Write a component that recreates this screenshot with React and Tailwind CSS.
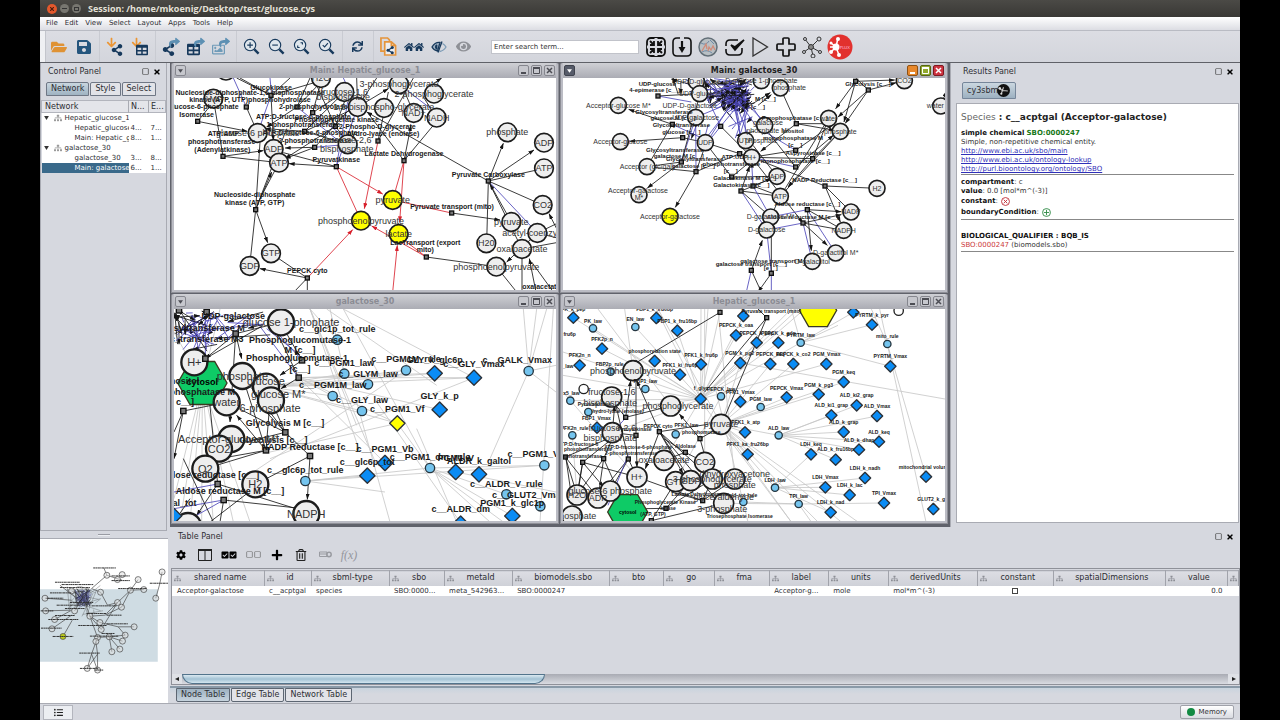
// ============================================================
// NETWORK WORKBENCH
// Desktop window: toolbar, control panel, four network views,
// results panel and the node table.
// ============================================================
import {
  FaFolderOpen, FaSave, FaShareAlt, FaTable, FaShare, FaArrowDown, FaRegImage,
  FaSync, FaHome, FaEyeSlash, FaEye, FaCog, FaPlus, FaRegTrashAlt, FaCheckSquare,
  FaListUl, FaSitemap, FaRegSquare, FaTimes
} from 'react-icons/fa';

// ---- Network data ----
// circle: [x, y, label, fill?, dx?, dy?]
// square: [x, y]
// edge:   [x1, y1, x2, y2, color?, arrow?]   color: k black, b blue, r red, g grey
// text:   [x, y, label]   bold reaction names

const GREY = '#eeeeee';
const YELLOW = '#ffff00';

const hepaticMain = {
  viewBox: '12 48 1146 636',
  r: 29, font: 27, bold: 21, stroke: 4,
  circles: [
    [168, 26, ''], [130, 110, 'AMP'], [453, 48, 'H2O'], [523, 90, 'fructose-1,6'], [563, 135, '1,3-bisphospho-glycerate', GREY, 78],
    [642, 138, ''], [687, 67, '3-phosphoglycerate'], [792, 95, '2-phosphoglycerate'], [731, 153, 'NAD+'], [800, 167, 'NADH'],
    [263, 213, 'glucose-6 phosphate'], [311, 261, 'ADP'], [327, 302, 'ATP'], [533, 247, 'fructose-2,6', GREY, 0, -12],
    [1012, 211, 'phosphate'], [1122, 242, 'ADP'], [1122, 319, 'ATP'], [1118, 429, 'CO2'], [1024, 480, 'pyruvate'],
    [1102, 513, 'acetyl-coenzyme A', GREY, 8], [1056, 561, 'oxaloacetate'], [949, 544, 'H20'], [979, 614, 'phosphoenolpyruvate'],
    [668, 414, 'pyruvate', YELLOW], [573, 476, 'phosphoenolpyruvate', YELLOW], [686, 516, 'lactate', YELLOW],
    [303, 574, 'GTP'], [239, 612, 'GDP']
  ],
  plain: [[530, 262, 'bisphosphate'], [520, 104, 'bisphosphate']],
  squares: [
    [83, 178], [159, 283], [229, 135], [257, 443], [412, 648], [499, 314], [404, 208], [434, 256], [496, 193],
    [381, 135], [428, 152], [624, 237], [702, 296], [955, 357], [845, 453], [769, 585], [303, 100]
  ],
  edges: [
    [83, 178, 232, 208, 'k', 1], [83, 178, 122, 130], [130, 110, 159, 283], [159, 283, 280, 266, 'k', 1], [159, 283, 327, 302],
    [229, 135, 263, 213], [229, 135, 190, 48, 'b'], [200, 48, 303, 100], [303, 100, 310, 235, 'k', 1], [303, 100, 263, 213, 'b'],
    [303, 100, 210, 48], [303, 100, 360, 48], [303, 100, 440, 60], [499, 314, 357, 305, 'k', 1], [499, 314, 340, 272],
    [499, 314, 573, 476, 'r'], [499, 314, 638, 396, 'r', 1], [499, 314, 533, 120, 'b'], [499, 314, 563, 135, 'b'],
    [257, 443, 305, 330, 'k', 1], [257, 443, 270, 240], [257, 443, 350, 200], [270, 410, 327, 302], [257, 443, 293, 542, 'k', 1],
    [257, 443, 239, 612], [412, 648, 270, 620, 'k', 1], [412, 648, 303, 574], [412, 648, 548, 503, 'r', 1], [412, 648, 412, 690],
    [412, 648, 372, 690], [624, 237, 583, 440, 'r', 1], [624, 237, 730, 48], [624, 237, 655, 90], [702, 296, 668, 414, 'r'],
    [702, 296, 689, 480, 'r', 1], [702, 296, 723, 190, 'k', 1], [702, 296, 790, 190], [702, 296, 595, 155], [668, 690, 682, 550, 'r', 1],
    [668, 414, 845, 453, 'r'], [845, 453, 990, 474, 'k', 1], [769, 585, 605, 492, 'r', 1], [769, 585, 979, 614], [769, 585, 690, 525, 'r'],
    [955, 357, 590, 150, 'k', 1], [955, 357, 1000, 244, 'k', 1], [955, 357, 1092, 264, 'k', 1], [955, 357, 1122, 319], [955, 357, 1118, 429],
    [955, 357, 950, 544], [1024, 480, 960, 366, 'k', 1], [1102, 513, 960, 362, 'b'], [955, 357, 1056, 561], [1102, 513, 1170, 480],
    [1102, 513, 1170, 530], [1102, 513, 1010, 600, 'k', 1], [1056, 561, 1056, 700], [1056, 561, 1170, 540], [979, 614, 1040, 690],
    [1100, 700, 1078, 590, 'k', 1], [1150, 690, 1085, 600], [1160, 500, 1137, 455, 'k', 1], [404, 208, 533, 247], [404, 208, 285, 200, 'k', 1],
    [404, 208, 563, 135], [404, 208, 523, 90], [434, 256, 345, 258, 'k', 1], [434, 256, 533, 247, 'b'], [434, 256, 345, 290, 'k', 1],
    [434, 256, 540, 140], [496, 193, 523, 120], [496, 193, 533, 240], [496, 193, 345, 290, 'k', 1], [496, 193, 430, 48], [381, 135, 453, 60],
    [381, 135, 510, 240, 'b'], [381, 135, 290, 195, 'k', 1], [381, 135, 420, 48], [428, 152, 523, 90], [428, 152, 453, 60, 'k', 1],
    [428, 152, 530, 230, 'b'], [563, 135, 560, 48], [563, 135, 655, 80, 'k', 1], [563, 135, 620, 48], [563, 135, 520, 48, 'b'],
    [731, 153, 700, 80], [800, 167, 760, 105], [790, 65, 815, 48, 'k', 1], [687, 67, 780, 138, 'b'], [300, 48, 305, 100, 'b']
  ],
  texts: [
    [303, 76, 'Glucokinase'], [240, 92, 'Nucleoside-diphosphate-1,6-bisphosphatase'], [240, 113, 'kinase (ATP, UTP)phosphohydrolase'],
    [100, 133, 'glucose-6-phosphate'], [80, 157, 'Isomerase'], [430, 133, '2-phosphohydrolase'], [400, 163, 'ATP:D-fructose-6-phosphate'],
    [500, 172, 'Phosphoglycerate kinase'], [400, 188, '1-phosphotransferase'], [622, 194, '2-Phospho-D-glycerate'], [640, 216, 'hydro-lyase (enolase)'],
    [160, 215, 'ATP:AMP'], [420, 212, 'ATP:D-fructose-6-phosphate'], [155, 239, 'phosphotransferase'], [435, 235, '2-phosphotransferase'],
    [157, 262, '(Adenylatkinase)'], [702, 276, 'Lactate Dehydrogenase'], [499, 293, 'Pyruvatkinase'], [955, 337, 'Pyruvate Carboxylase'],
    [254, 399, 'Nucleoside-diphosphate'], [254, 421, 'kinase (ATP, GTP)'], [846, 433, 'Pyruvate transport (mito)'], [766, 541, 'LacTransport (export'],
    [766, 564, 'mito)'], [412, 627, 'PEPCK cyto'], [1108, 674, 'oxalacetat']
  ]
};

const galactoseMain = {
  viewBox: '15 48 1146 636',
  r: 25, font: 21, bold: 18, stroke: 4,
  circles: [
    [181, 130, 'Acceptor-glucose M*'], [187, 239, 'Acceptor-glucose'], [267, 314, 'Acceptor (glc/gal)'], [243, 398, 'M*', GREY, 0, 10],
    [336, 463, 'Acceptor-galactose', YELLOW], [415, 58, 'UDP-D-glucose'], [425, 95, 'UDP-glucose'], [413, 166, 'UDP-galactose'], [442, 242, 'UDP'],
    [610, 56, 'D-glucose 1-phosphate'], [667, 78, 'phosphate', GREY, 28], [620, 190, 'galactose', GREY, 10, -9], [563, 236, 'UTP'], [581, 286, 'H+'],
    [657, 343, 'ADP'], [667, 403, 'ATP'], [638, 465, 'D-galactose M*'], [626, 504, 'D-galactose'], [812, 169, 'water'], [847, 208, 'phosphate'],
    [957, 379, 'H2'], [879, 450, 'NADP'], [857, 505, 'NADPH'], [833, 573, 'D-galactitol M*'], [763, 598, 'D-galactitol'], [1039, 56, 'CO2'], [1148, 132, 'water', GREY, -16]
  ],
  plain: [[240, 387, 'Acceptor-galactose'], [395, 132, 'UDP-D-galactose'], [630, 205, 'phosphate M*'], [610, 236, 'phosphate']],
  squares: [
    [300, 102], [343, 187], [374, 227], [370, 300], [414, 329], [488, 193], [521, 345], [545, 275], [549, 387], [585, 372], [713, 265],
    [713, 315], [764, 290], [715, 185], [801, 372], [748, 443], [735, 483], [580, 625], [640, 634], [931, 84], [893, 58]
  ],
  edges: [
    [343, 187, 212, 142, 'k', 1], [374, 227, 215, 238, 'k', 1], [374, 227, 442, 242, 'k', 1], [343, 187, 267, 314], [343, 187, 440, 232, 'b'],
    [370, 300, 267, 314], [370, 300, 268, 378, 'k', 1], [370, 300, 413, 166, 'b'], [370, 300, 425, 100], [414, 329, 352, 436, 'k', 1],
    [414, 329, 413, 166, 'b'], [414, 329, 267, 314], [414, 329, 442, 250, 'k', 1], [300, 102, 425, 95], [300, 102, 400, 120, 'b'],
    [488, 193, 430, 70, 'b'], [488, 193, 581, 286], [488, 193, 450, 240, 'b'], [521, 345, 442, 242], [521, 345, 575, 300], [521, 345, 657, 343],
    [545, 275, 442, 242, 'k', 1], [545, 275, 581, 286], [549, 387, 575, 312, 'k', 1], [549, 387, 640, 350, 'k', 1], [549, 387, 667, 403],
    [549, 387, 626, 504, 'b'], [549, 387, 638, 465], [585, 372, 581, 300, 'b', 1], [585, 372, 657, 343], [585, 372, 667, 403], [585, 372, 638, 465, 'b'],
    [414, 329, 545, 275, 'k'], [581, 286, 764, 290], [581, 286, 713, 265], [581, 286, 801, 372], [581, 286, 735, 483, 'k', 1],
    [713, 265, 605, 200, 'b'], [713, 265, 826, 186, 'k', 1], [713, 315, 630, 210], [713, 315, 826, 220, 'k', 1], [713, 315, 581, 286, 'b'],
    [764, 290, 690, 375, 'k', 1], [764, 290, 812, 169], [764, 290, 847, 208], [715, 185, 812, 185], [715, 185, 667, 78], [715, 185, 830, 205, 'k', 1],
    [715, 185, 608, 268, 'k', 1], [667, 403, 812, 169, 'k', 1], [667, 403, 847, 208], [801, 372, 957, 379], [801, 372, 879, 450], [801, 372, 847, 480, 'k', 1],
    [748, 443, 850, 449, 'k', 1], [748, 443, 638, 465, 'b'], [748, 443, 857, 505], [748, 443, 760, 566, 'k', 1], [748, 443, 833, 573, 'b'],
    [735, 483, 857, 505, 'k', 1], [735, 483, 626, 504, 'b'], [735, 483, 808, 550, 'k', 1], [735, 483, 763, 598, 'b'], [735, 483, 850, 458, 'k', 1],
    [580, 625, 613, 535, 'k', 1], [580, 625, 565, 690, 'b'], [580, 625, 610, 690], [640, 634, 626, 504, 'b'], [640, 634, 640, 480], [640, 634, 600, 690, 'k', 1],
    [640, 634, 640, 690, 'b'], [893, 58, 833, 140, 'k', 1], [893, 58, 1010, 54, 'k', 1], [893, 58, 858, 180, 'k', 1], [931, 84, 1015, 62, 'k', 1],
    [931, 84, 840, 165, 'k', 1], [931, 84, 862, 184, 'k', 1], [1148, 132, 1165, 88, 'k', 1], [893, 48, 931, 84], [667, 403, 638, 465], [657, 343, 585, 250]
  ],
  texts: [
    [298, 65, 'UDP-glucose'], [290, 85, '4-epimerase [c__]'], [318, 149, 'Glycosyltransferase'], [345, 168, 'glucose M [c__]'], [370, 188, 'Glycosyltransferase'],
    [370, 209, 'glucose [c__]'], [350, 263, 'Glycosyltransferase'], [362, 283, 'galactose M [c__]'], [410, 292, 'Glycosyltransferase'], [406, 311, 'galactose [c__]'],
    [530, 286, 'ATP:UDP'], [520, 307, 'phosphotransferase'], [518, 327, '[c__]'], [560, 348, 'Galactokinase M [c__]'], [550, 369, 'Galactokinase [c__]'],
    [710, 168, 'Pyrophosphatase [c__]'], [705, 207, 'Inositol'], [705, 228, 'monophosphatase M'], [712, 248, '[c__]'], [765, 272, 'Aspyrosinase [c__]'],
    [712, 297, 'monophosphatase [c__]'], [800, 353, 'NADP Reductase [c__]'], [748, 425, 'Aldose reductase [c__]'], [735, 464, 'Aldose reductase M [c__]'],
    [640, 597, 'galactose transport M'], [580, 607, 'galactose transport [c__]'], [638, 617, '[e__]'], [930, 66, 'Glycolysis [c__]'], [622, 111, 'M [c__]'], [600, 135, '[c__]']
  ]
};

const galactoseView = {
  viewBox: '12 51 1146 636',
  r: 40, font: 33, bold: 27, stroke: 6,
  circles: [
    [333, 91, 'glucose 1-phophate', GREY, 30], [217, 252, 'phosphate'], [288, 284, 'glucose', GREY, 0, -16], [303, 325, 'glucose M*', GREY, 22, -18],
    [184, 441, 'Acceptor-glucose M*', GREY, -8], [147, 470, 'CO2'], [106, 530, 'O2'], [256, 577, 'H2'], [409, 666, 'NADPH'], [54, 702, ''],
    [73, 211, 'H+'], [170, 331, 'water']
  ],
  plain: [[300, 347, '6-phosphate']],
  squares: [[106, 200], [396, 205], [386, 257], [346, 421], [288, 475], [420, 492], [143, 576], [161, 624], [40, 357], [197, 125], [110, 60], [27, 55]],
  hexes: [[97, 273, 74, '#0ecb66', 'cytosol']],
  edges: [
    [396, 205, 330, 90], [396, 205, 310, 110, 'b'], [396, 205, 330, 250, 'k', 1], [386, 257, 333, 290, 'k', 1], [386, 257, 260, 90, 'b'], [386, 257, 325, 130],
    [346, 421, 217, 252, 'k', 1], [346, 421, 303, 325], [346, 421, 170, 331], [346, 421, 147, 470], [346, 421, 260, 330], [288, 475, 200, 370, 'k', 1],
    [288, 475, 217, 252], [288, 475, 147, 500], [288, 475, 300, 325], [288, 475, 106, 530], [420, 492, 256, 577], [420, 492, 412, 622, 'k', 1],
    [420, 492, 346, 421], [143, 576, 409, 660], [143, 576, 80, 670, 'k', 1], [161, 624, 400, 650], [161, 624, 80, 670, 'b'], [161, 624, 150, 690],
    [161, 624, 12, 650, 'b'], [143, 576, 12, 600, 'b'], [143, 576, 106, 200], [40, 357, 12, 500, 'k', 1], [40, 357, 170, 331], [40, 357, 12, 420],
    [106, 200, 280, 100], [106, 200, 106, 51, 'b'], [197, 125, 333, 91, 'k', 1], [197, 125, 215, 200, 'k', 1], [197, 125, 180, 390, 'k', 1], [197, 125, 106, 200, 'k', 1],
    [290, 110, 390, 190, 'b', 1], [12, 690, 60, 620], [40, 500, 130, 690], [120, 690, 250, 590]
  ],
  diamonds: [
    [794, 244], [912, 257], [809, 353], [682, 394, YELLOW], [645, 513], [592, 551], [857, 540], [927, 547], [1027, 672], [872, 695], [12, 672]
  ],
  dots: [[502, 143], [523, 245], [594, 277], [488, 312], [576, 357], [708, 235], [1076, 237], [406, 567], [780, 528], [1123, 520], [1009, 607], [1111, 643]],
  texts: [
    [502, 111, 'c__glc1p_tot_rule'], [390, 144, 'Phosphoglucomutase-1'], [390, 175, 'M [c__]'], [381, 198, 'Phosphoglucomutase-1'], [390, 232, '[c__]'],
    [523, 212, 'c__PGM1_law'], [594, 245, 'c__GLYM_law'], [488, 279, 'c__PGM1M_law'], [576, 324, 'c__GLY_law'], [708, 202, 'c__PGM1M_rule'], [794, 204, 'GLY_k_glc6p'],
    [912, 215, 'c__GLY_Vmax'], [1042, 204, 'c__GALK_Vmax'], [809, 312, 'GLY_k_p'], [682, 352, 'c__PGM1_Vf'], [645, 471, 'c__PGM1_Vb'], [592, 511, 'c__glc6p_tot'],
    [780, 496, 'c__PGM1_dm_rule'], [857, 497, 'PGM1_V'], [927, 507, 'ALDR_k_galtol'], [1090, 487, 'c__PGM1_V'], [1009, 576, 'c__ALDR_V_rule'], [1076, 610, 'c__GLUT2_Vmax'],
    [1027, 632, 'PGM1_k_glc1p'], [872, 652, 'c__ALDR_dm'], [406, 535, 'c__glc6p_tot_rule'], [345, 394, 'Glycolysis M [c__]'], [310, 443, 'Glycolysis [c__]'],
    [420, 464, 'NADP Reductase [c__]'], [120, 549, 'Aldose reductase [c__]'], [180, 596, 'Aldose reductase M [c__]'], [35, 632, 'gal_tot'], [40, 267, 'Inositol'],
    [60, 299, 'monophosphatase M'], [45, 330, 'c__]'], [80, 107, 'Glycosyltransferase M'], [110, 140, 'c_transferase M3'], [190, 72, 'UDP-galactose']
  ]
};

const hepaticView = {
  viewBox: '15 51 1146 636',
  r: 31, font: 27, bold: 15, stroke: 4,
  circles: [
    [225, 236, 'phosphoenolpyruvate'], [161, 315, 'fructose-1,6', GREY, 0, -15], [338, 342, 'phosphoglycerate', GREY, 22], [489, 397, 'pyruvate'],
    [163, 422, 'fructose-2,6', GREY, 0, -14], [318, 505, 'oxaloacetate'], [440, 511, 'CO2'], [237, 555, 'H+'], [353, 569, 'GTP'], [398, 566, 'GDP'],
    [463, 561, '3-phosphoglycerate'], [530, 561, 'dihydroxyacetone', GREY, 0, -14], [57, 609, 'H2O'], [120, 618, 'ADP'], [157, 597, 'glucose-6 phosphate'],
    [497, 634, 'glyceraldehyde', GREY, 0, -20], [42, 672, 'phosphate', GREY, 10]
  ],
  plain: [[157, 333, 'bisphosphate'], [157, 439, 'bisphosphate'], [530, 578, 'phosphate'], [493, 651, '3-phosphate']],
  squares: [[203, 376], [234, 430], [304, 419], [22, 495], [74, 511], [137, 500], [211, 501], [382, 481], [426, 440], [486, 61], [626, 77], [434, 626], [324, 649], [280, 686]],
  hexes: [[209, 660, 60, '#0ecb66', 'cytosol'], [780, 55, 56, YELLOW, '']],
  edges: [
    [486, 61, 225, 218, 'k', 1], [626, 77, 440, 300], [626, 77, 498, 380], [626, 77, 600, 51], [203, 376, 218, 266, 'k', 1], [203, 376, 165, 330], [203, 376, 338, 342],
    [234, 430, 234, 266], [234, 430, 237, 525, 'k', 1], [234, 430, 163, 422], [304, 419, 236, 266, 'k', 1], [304, 419, 375, 545, 'k', 1], [304, 419, 463, 561],
    [304, 419, 398, 566], [304, 419, 450, 397], [304, 419, 262, 530, 'k', 1], [22, 495, 57, 609], [22, 495, 150, 440], [22, 495, 120, 618], [74, 511, 137, 585, 'k', 1],
    [74, 511, 163, 440], [74, 511, 60, 600], [74, 511, 237, 555], [137, 500, 57, 609, 'k', 1], [137, 500, 163, 440], [137, 500, 120, 618], [137, 500, 175, 585],
    [211, 501, 175, 345], [211, 501, 237, 555], [211, 501, 157, 597, 'k', 1], [211, 501, 130, 600], [382, 481, 318, 505], [382, 481, 440, 511], [382, 481, 318, 440],
    [426, 440, 440, 490], [426, 440, 364, 366, 'k', 1], [426, 440, 500, 397], [434, 626, 340, 600], [434, 626, 463, 561], [434, 626, 237, 555], [434, 626, 530, 561],
    [324, 649, 463, 561, 'k', 1], [324, 649, 398, 566], [324, 649, 260, 650], [280, 686, 353, 569], [280, 686, 497, 634], [163, 422, 170, 340, 'k', 1],
    [40, 610, 24, 500], [57, 609, 74, 511], [163, 422, 210, 370, 'b'], [210, 490, 150, 640, 'b'], [304, 419, 489, 640]
  ],
  diamonds: [
    [46, 77], [295, 78], [358, 116], [132, 170], [65, 220], [290, 207], [366, 248], [429, 217], [534, 130], [556, 72], [596, 152], [661, 152], [547, 213], [637, 216],
    [706, 216], [805, 216], [886, 61], [942, 98], [997, 223], [857, 270], [782, 307], [896, 340], [686, 316], [547, 329], [820, 370], [957, 372], [857, 420],
    [963, 449], [903, 473], [833, 503], [759, 487], [569, 487], [561, 421], [921, 558], [1104, 554], [802, 586], [875, 609], [978, 633], [1126, 651], [818, 661],
    [428, 321], [117, 407]
  ],
  dots: [
    [105, 109], [232, 105], [158, 239], [262, 291], [37, 326], [91, 360], [43, 430], [353, 427], [489, 313], [608, 345], [728, 152], [988, 156], [662, 430],
    [651, 587], [722, 636], [556, 630]
  ],
  rings: [[77, 291], [1022, 56]],
  texts: [
    [105, 87, 'PK_law'], [232, 82, 'EN_law'], [46, 52, 'PK_k_pep'], [290, 52, 'FBP1_k_fru6bp'], [358, 88, 'FBP1_k_fru16bp'], [132, 141, 'PFK2p_n'], [65, 191, 'PFK2n_n'],
    [35, 128, 'fru6p'], [290, 178, 'phosphorylation state'], [155, 217, 'FBP2p_rule'], [366, 219, 'PFK1_ki_fru6p'], [429, 189, 'PFK1_k_fru6p'], [30, 224, '_law'],
    [534, 101, 'PEPCK_k_oaa'], [596, 123, 'PEPCK_k_pep'], [661, 123, 'PEPCK_k_gdp'], [728, 130, 'PYRTM_law'], [545, 185, 'PGM_k_pg2'], [637, 188, 'PEPCK_keq'],
    [706, 188, 'PEPCK_k_co2'], [806, 188, 'PGM_Vmax'], [640, 58, 'Pyruvate transport (mito)'], [942, 69, 'PYRTM_k_pyr'], [988, 134, 'mito_rule'], [997, 194, 'PYRTM_Vmax'],
    [857, 241, 'PGM_keq'], [782, 279, 'PGM_k_pg3'], [896, 311, 'ALD_ki2_grap'], [686, 288, 'PEPCK_Vmax'], [608, 323, 'PGM_law'], [547, 301, 'PFK1_Vmax'],
    [489, 291, 'PEPCK_law'], [429, 290, 'f_glyc'], [262, 268, 'FBP1_law'], [820, 341, 'ALD_ki1_grap'], [957, 343, 'ALD_Vmax'], [857, 391, 'ALD_k_grap'], [963, 420, 'ALD_keq'],
    [903, 444, 'ALD_k_dhap'], [833, 473, 'ALD_k_fru16bp'], [759, 458, 'LDH_keq'], [662, 408, 'ALD_law'], [563, 391, 'PFK1_k_atp'], [569, 458, 'PFK1_ka_fru26bp'],
    [921, 528, 'LDH_k_nadh'], [1100, 525, 'mitochondrial volume'], [802, 557, 'LDH_Vmax'], [875, 580, 'LDH_k_lac'], [978, 604, 'TPI_Vmax'], [1126, 623, 'GLUT2_k_glc'],
    [818, 632, 'LDH_k_nad'], [722, 614, 'TPI_law'], [651, 564, 'LDH_law'], [115, 378, 'FBP1_Vmax'], [50, 408, 'PFK2n_rule'], [40, 303, 'x5_law'],
    [180, 357, 'hydro-lyase (enolase)'], [110, 337, 'Pyruvatkinase'], [60, 458, 'ATP:D-fructose-6'], [90, 472, 'phosphotransferase'], [240, 466, 'ATP:D-fructose-6-phosphate'],
    [220, 485, '2-phosphotransferase'], [60, 492, 'phosphotransferase'], [230, 413, 'Pyruvatkinase'], [300, 402, 'PEPCK cyto'], [385, 401, 'PFK1_law'], [430, 422, 'phosphomutase'],
    [382, 462, 'Aldolase'], [425, 606, 'Lactate Dehydrogenase'], [555, 609, 'glc_tot_rule'], [322, 630, 'Phosphoglycerate Kinase'], [330, 648, 'kinase'],
    [285, 667, '(ATP, GTP)'], [545, 674, 'Triosephosphate Isomerase']
  ]
};

// Thin grey parameter links fan out from a few hub nodes
const fan = (hub, ends) => ends.map(([x, y]) => [hub[0], hub[1], x, y, 'g']);

// Repeatable scatter value between 0 and 1
const noise = (n) => {
  const v = Math.sin(n * 12.9898) * 43758.5453;
  return v - Math.floor(v);
};

// Dense cluster of reactions inside a box
const tangle = (count, x, y, w, h) =>
  Array.from({ length: count }, (_, i) => [
    x + noise(i * 4 + 1) * w,
    y + noise(i * 4 + 2) * h,
    x + noise(i * 4 + 3) * w,
    y + noise(i * 4 + 4) * h,
    i % 3 === 0 ? 'k' : 'b',
    i % 3 === 0 ? 1 : 0
  ]);

galactoseView.edges = [
  ...fan([97, 273], [[12, 620], [30, 690], [60, 690], [95, 690], [130, 690], [190, 690], [240, 690], [12, 120], [150, 51]]),
  ...fan([288, 284], [[523, 245], [594, 277], [794, 244], [912, 257], [488, 312], [576, 357], [708, 235], [682, 394]]),
  ...fan([386, 257], [[682, 394], [794, 244], [912, 257], [809, 353], [488, 312], [645, 513]]),
  ...fan([420, 51], [[570, 480], [560, 400], [620, 520], [502, 143]]),
  ...fan([1076, 237], [[1060, 51], [1100, 51], [1130, 51], [1158, 220], [960, 500], [1158, 300]]),
  ...fan([780, 528], [[1009, 607], [1027, 672], [960, 690], [1000, 690], [1123, 520], [682, 394], [520, 51]]),
  ...fan([406, 567], [[592, 551], [780, 528], [1123, 520], [645, 600]]),
  [470, 51, 800, 280, 'g'], [520, 51, 912, 257, 'g'], [560, 330, 660, 690, 'g'], [620, 330, 870, 690, 'g'], [300, 480, 682, 394, 'g'],
  [740, 410, 860, 690, 'g'], [480, 51, 523, 245, 'g'], [1158, 600, 857, 540, 'g'], [300, 500, 912, 257, 'g'], [250, 540, 708, 235, 'g'], [1150, 51, 1110, 690, 'g'],
  ...galactoseView.edges,
  ...tangle(36, 12, 51, 130, 130),
  ...tangle(18, 12, 55, 290, 90)
];

hepaticView.edges = [
  ...fan([428, 321], [[105, 109], [232, 105], [132, 170], [46, 77], [295, 51], [358, 116], [429, 51], [450, 51], [488, 51], [534, 130], [556, 72],
    [596, 152], [661, 152], [728, 152], [805, 216], [700, 51], [720, 51], [740, 51], [15, 180], [15, 250], [37, 326], [91, 360]]),
  ...fan([489, 397], [[547, 213], [637, 216], [706, 216], [662, 430], [686, 316], [782, 307], [857, 270], [561, 421], [569, 487], [850, 690], [900, 690], [780, 690], [700, 690]]),
  ...fan([662, 430], [[820, 370], [957, 372], [857, 420], [963, 449], [903, 473], [833, 503], [896, 340]]),
  ...fan([651, 587], [[802, 586], [875, 609], [921, 558], [759, 487], [818, 661], [489, 400]]),
  ...fan([722, 636], [[978, 633], [556, 630], [497, 634], [760, 690]]),
  ...fan([728, 152], [[886, 61], [942, 98], [997, 223], [840, 100], [700, 51]]),
  ...fan([988, 156], [[940, 51], [965, 51], [1104, 554], [1104, 690]]),
  [547, 213, 1161, 321, 'g'], [163, 422, 428, 321, 'g'], [225, 236, 200, 51, 'g'], [120, 51, 338, 342, 'g'], [300, 51, 489, 397, 'g'],
  [318, 505, 428, 321, 'g'], [440, 511, 440, 51, 'g'], [489, 313, 353, 569, 'g'], [530, 561, 480, 51, 'g'], [570, 690, 470, 280, 'g'],
  [700, 690, 430, 330, 'g'], [57, 609, 43, 430, 'g'], [237, 555, 15, 300, 'g'],
  ...hepaticView.edges
];

galactoseMain.edges = [
  ...tangle(60, 440, 50, 150, 90),
  ...tangle(60, 490, 80, 90, 70),
  ...tangle(16, 340, 40, 250, 70),
  ...tangle(12, 490, 110, 100, 120),
  [560, 140, 563, 236, 'b'], [540, 140, 570, 220, 'b'], [580, 130, 620, 190, 'b'], [520, 130, 442, 232, 'b'], [500, 130, 413, 166, 'b'],
  [550, 130, 600, 200, 'b'], [530, 140, 550, 230, 'b'], [510, 140, 450, 235, 'b'], [540, 130, 488, 193, 'b'], [570, 130, 640, 200, 'b'],
  [415, 190, 400, 230, 'b', 1], [450, 190, 442, 220, 'b'], [560, 140, 637, 92, 'k', 1], [600, 130, 640, 98, 'k', 1],
  ...galactoseMain.edges
];

const overview = {
  viewBox: '0 41 384 493',
  nodes: [
    [367, 140], [348, 219], [295, 163], [312, 193], [247, 148], [233, 163], [201, 150], [15, 219], [17, 257], [44, 283], [36, 311], [104, 257], [150, 273],
    [233, 232], [245, 246], [182, 201], [95, 197], [283, 305], [256, 330], [248, 348], [240, 372], [216, 380], [180, 292], [184, 313], [173, 337], [168, 349],
    [142, 430], [173, 435], [272, 195], [208, 335]
  ],
  edges: [
    [367, 140, 360, 176], [360, 176, 348, 219], [201, 150, 155, 190], [201, 150, 247, 165], [295, 163, 272, 195], [272, 195, 312, 193], [272, 195, 233, 232],
    [272, 195, 245, 246], [233, 232, 200, 265], [245, 246, 195, 270], [15, 219, 95, 225], [17, 257, 90, 255], [44, 283, 95, 255], [36, 311, 95, 270], [69, 334, 97, 285],
    [104, 257, 130, 215], [95, 197, 130, 215], [150, 273, 130, 215], [150, 273, 180, 292], [150, 273, 173, 337], [150, 273, 195, 270], [180, 292, 235, 305],
    [235, 305, 283, 305], [235, 305, 256, 330], [208, 335, 256, 330], [208, 335, 248, 348], [208, 335, 216, 380], [208, 335, 240, 372], [173, 337, 208, 335],
    [173, 337, 155, 387], [168, 349, 173, 387], [155, 387, 142, 430], [173, 387, 173, 435], [155, 387, 173, 435], [173, 387, 142, 430], [182, 201, 203, 240],
    [203, 240, 233, 232], [155, 190, 182, 201], [150, 273, 184, 313], [184, 313, 233, 232], [60, 180, 105, 215], [201, 150, 192, 128]
  ],
  // captions are too small to read at this scale, drawn as dashes
  captions: [
    [160, 128, 68], [45, 171, 75], [65, 178, 95], [30, 203, 65], [20, 219, 50], [2, 257, 38], [25, 283, 90], [3, 309, 62], [38, 334, 62], [115, 301, 85], [150, 333, 85],
    [118, 384, 62], [155, 242, 75], [200, 270, 45], [330, 174, 55], [120, 430, 55], [165, 435, 26], [215, 166, 55], [235, 190, 85], [140, 265, 60], [200, 296, 65],
    [185, 325, 40], [215, 152, 55], [50, 240, 70], [45, 271, 60], [60, 187, 90], [75, 250, 60], [90, 232, 70]
  ]
};

const strokes = { k: '#141414', b: '#4a44b8', r: '#d8202c', g: '#c8c8c8' };

function Network({ id, data, title }) {
  const { r, font, bold, stroke } = data;
  return (
    <svg
      className="absolute inset-0 h-full w-full"
      viewBox={data.viewBox}
      preserveAspectRatio="xMidYMid slice"
      role="img"
      aria-label={title}
      fontFamily="Liberation Sans, sans-serif"
      textAnchor="middle"
    >
      <defs>
        {Object.entries(strokes).map(([key, color]) => (
          <marker key={key} id={`${id}-${key}`} viewBox="0 0 18 12" refX="17" refY="6" markerWidth="18" markerHeight="12" markerUnits="userSpaceOnUse" orient="auto">
            <path d="M0 0L18 6L0 12Z" fill={key === 'b' ? '#141414' : color} />
          </marker>
        ))}
      </defs>
      {data.edges.map(([x1, y1, x2, y2, c = 'k', arrow], i) => (
        <line
          key={i} x1={x1} y1={y1} x2={x2} y2={y2}
          stroke={strokes[c]} strokeWidth="2.5"
          markerEnd={arrow ? `url(#${id}-${c})` : undefined}
        />
      ))}
      {data.hexes?.map(([x, y, s, fill, label]) => (
        <g key={fill}>
          <path
            d={`M${x - s} ${y}L${x - s / 2} ${y - s * 0.87}H${x + s / 2}L${x + s} ${y}L${x + s / 2} ${y + s * 0.87}H${x - s / 2}Z`}
            fill={fill} stroke="#3a3a20" strokeWidth="4"
          />
          <text x={x} y={y + 7} fontSize={bold} fontWeight="bold">{label}</text>
        </g>
      ))}
      {data.circles.map(([x, y, , fill = GREY], i) => (
        <circle key={i} cx={x} cy={y} r={r - 1} fill={fill} stroke="#1c1c1c" strokeWidth={stroke + 1} />
      ))}
      {data.rings?.map(([x, y]) => (
        <circle key={x} cx={x} cy={y} r="14" fill="#fff" stroke="#222" strokeWidth="4" />
      ))}
      {data.dots?.map(([x, y]) => (
        <circle key={`${x}-${y}`} cx={x} cy={y} r={bold > 20 ? 14 : 11} fill="#74c4ee" stroke="#25353f" strokeWidth="4" />
      ))}
      {data.diamonds?.map(([x, y, fill = '#0a8cf5']) => {
        const d = bold > 20 ? 23 : 17;
        return (
          <path
            key={`${x}-${y}`}
            d={`M${x} ${y - d}L${x + d} ${y}L${x} ${y + d}L${x - d} ${y}Z`}
            fill={fill} stroke="#2b3138" strokeWidth="4" strokeLinejoin="round"
          />
        );
      })}
      {data.squares.map(([x, y], i) => (
        <rect key={i} x={x - stroke - 2} y={y - stroke - 2} width={2 * stroke + 4} height={2 * stroke + 4} fill="#777" stroke="#111" strokeWidth="4" />
      ))}
      {data.texts.map(([x, y, label], i) => (
        <text key={i} x={x} y={y + bold * 0.35} fontSize={bold} fontWeight="bold" fill="#1a1a1a">{label}</text>
      ))}
      {data.circles.map(([x, y, label, , dx = 0, dy = 0], i) => (
        <text key={i} x={x + dx} y={y + dy + font * 0.35} fontSize={font} fill="#333">{label}</text>
      ))}
      {data.plain.map(([x, y, label], i) => (
        <text key={i} x={x} y={y + font * 0.35} fontSize={font} fill="#333">{label}</text>
      ))}
    </svg>
  );
}

function Overview() {
  return (
    <svg className="h-full w-full" viewBox={overview.viewBox} preserveAspectRatio="xMinYMin meet" role="img" aria-label="Network overview">
      <rect x="0" y="192" width="354" height="218" fill="#cfdce3" />
      <g stroke="#444" strokeWidth="2">
        {overview.edges.map(([x1, y1, x2, y2], i) => <line key={i} x1={x1} y1={y1} x2={x2} y2={y2} />)}
        {tangle(60, 105, 190, 50, 55).map(([x1, y1, x2, y2, c], i) => (
          <line key={i} x1={x1} y1={y1} x2={x2} y2={y2} stroke={c === 'b' ? '#4b4f8c' : '#222'} />
        ))}
        {tangle(24, 80, 175, 110, 100).map(([x1, y1, x2, y2], i) => (
          <line key={i} x1={x1} y1={y1} x2={x2} y2={y2} strokeWidth="1" />
        ))}
        {overview.nodes.map(([x, y]) => <circle key={`${x}-${y}`} cx={x} cy={y} r="9" fill="#ddd" fillOpacity="0.5" />)}
        <circle cx="69" cy="334" r="9" fill="#bccb1c" />
      </g>
      {overview.captions.map(([x, y, w]) => (
        <line key={`${x}-${y}`} x1={x} y1={y} x2={x + w} y2={y} stroke="#333" strokeWidth="3" strokeDasharray="7 1 4 1" />
      ))}
    </svg>
  );
}

// ---- Internal window ----
const frameButton = 'flex h-[11px] w-[11px] items-center justify-center rounded-xs border';

function NetworkWindow({ id, title, data, active }) {
  const idle = 'border-[#85868e] bg-[#c6c7cd] text-[#4c4d54]';
  return (
    <section className="flex min-h-0 min-w-0 flex-col rounded-t-xs border-x border-b border-[#8e8f97] bg-[#bbbcc4] px-[2px] pb-[2px]">
      <header className="flex h-[15px] shrink-0 items-center gap-[2px] bg-linear-to-b from-[#cfd0d5] to-[#abacb4] px-px">
        <button aria-label="Window menu" className={`${frameButton} ${active ? 'border-[#3f434e] bg-[#565b69] text-white' : idle}`}>
          <svg viewBox="0 0 6 4" className="h-[4px] w-[5px]"><path d="M0 0H6L3 4Z" fill="currentColor" /></svg>
        </button>
        <h2 className={`flex-1 pl-[26px] text-center text-[8px] leading-[12px] font-bold ${active ? 'text-[#222]' : 'text-[#8b8c94]'}`}>{title}</h2>
        <button aria-label="Minimize" className={`${frameButton} ${active ? 'border-[#8d5013] bg-[#e8882c] text-white' : idle}`}>
          <svg viewBox="0 0 7 7" className="h-[7px] w-[7px]"><path d="M1 6H6" stroke="currentColor" strokeWidth="2" /></svg>
        </button>
        <button aria-label="Maximize" className={`${frameButton} ${active ? 'border-[#566514] bg-[#91a82f] text-white' : idle}`}>
          <svg viewBox="0 0 7 7" className="h-[7px] w-[7px]"><path d="M.5 1H6.500V6.500H.5Z" stroke="currentColor" fill="none" /><path d="M0 1H7" stroke="currentColor" strokeWidth="2" /></svg>
        </button>
        <button aria-label="Close" className={`${frameButton} ${active ? 'border-[#7e1820] bg-[#ce3340] text-white' : idle}`}>
          <svg viewBox="0 0 7 7" className="h-[7px] w-[7px]"><path d="M1 1L6 6M6 1L1 6" stroke="currentColor" strokeWidth="1.500" /></svg>
        </button>
      </header>
      <div className="relative min-h-0 flex-1 overflow-hidden bg-white">
        <Network id={id} data={data} title={title} />
      </div>
    </section>
  );
}

// ---- Toolbar icons ----
const navy = '#17395c';

const ImportIcon = ({ icon: Icon }) => (
  <span className="relative block h-[19px] w-[17px]">
    <FaArrowDown className="absolute top-0 left-0 text-[11px] text-[#ec9533]" />
    <Icon className="absolute right-0 bottom-0 text-[12px] text-[#17395c]" />
  </span>
);

const ExportIcon = ({ icon: Icon, faded }) => (
  <span className="relative block h-[19px] w-[18px]">
    <Icon className={`absolute bottom-0 left-0 text-[13px] ${faded ? 'text-[#6f9bb8]' : 'text-[#17395c]'}`} />
    <FaShare className="absolute top-0 right-0 text-[11px] text-[#5d90b3]" />
  </span>
);

const ZoomIcon = ({ children }) => (
  <svg viewBox="0 0 18 18" className="h-[17px] w-[17px]" fill="none" stroke={navy} strokeWidth="1.200">
    <circle cx="7.500" cy="7.500" r="6" fill="#dfe6ec" />
    <path d="M12 12L16.500 16.500" strokeWidth="2.500" />
    {children}
  </svg>
);

const groups = [
  [
    ['Open session', <FaFolderOpen className="text-[16px] text-[#df9234]" />],
    ['Save session', <FaSave className="text-[16px] text-[#24557d]" />]
  ],
  [
    ['Import network', <ImportIcon icon={FaShareAlt} />],
    ['Import table', <ImportIcon icon={FaTable} />]
  ],
  [
    ['Export network', <ExportIcon icon={FaShareAlt} />],
    ['Export table', <ExportIcon icon={FaTable} />],
    ['Export image', <ExportIcon icon={FaRegImage} faded />]
  ],
  [
    ['Zoom in', <ZoomIcon><path d="M4.500 7.500H10.500M7.500 4.500V10.500" /></ZoomIcon>],
    ['Zoom out', <ZoomIcon><path d="M4.500 7.500H10.500" /></ZoomIcon>],
    ['Fit content', <ZoomIcon><path d="M8 5H10V7M7 10H5V8" /></ZoomIcon>],
    ['Fit selected', <ZoomIcon><path d="M5 7.500L7 9.500L10.500 5.500" /></ZoomIcon>]
  ],
  [['Refresh', <FaSync className="text-[11px] text-[#17395c]" />]],
  [
    ['New network from selection', (
      <svg viewBox="0 0 18 20" className="h-[19px] w-[17px]" fill="none" stroke="#e5953c" strokeWidth="1.800">
        <path d="M5 15H1V1H8L10 3V5" />
        <path d="M5 5H12L16.500 9V19H5Z" fill="#eceef2" />
        <path d="M12 5V9H16" />
        <path d="M13 11L8.500 14L13 16.500" stroke={navy} strokeWidth="1.200" />
        <g fill={navy} stroke="none"><circle cx="13" cy="11" r="1.600" /><circle cx="8.500" cy="14" r="1.600" /><circle cx="13" cy="16.500" r="1.600" /></g>
      </svg>
    )],
    ['First neighbours', <span className="flex text-[10px] text-[#17395c]"><FaHome /><FaHome /></span>],
    ['Hide selected', (
      <svg viewBox="0 0 16 12" className="h-[12px] w-[16px]" fill="none" stroke={navy} strokeWidth="1.300">
        <path d="M1 6Q4 1 9 1.500L6.500 10Q3 9.500 1 6Z" fill="#9fb0c2" /><path d="M6 4Q4 6 6 8" strokeWidth="2" />
        <path d="M11.500 2.500Q14 4 15 6Q12.500 10 8.500 10.500" stroke="#7d9cb6" /><path d="M11 .5L7 11.500" />
      </svg>
    )],
    ['Show all', <FaEye className="text-[15px] text-[#8e9096]" />]
  ]
];

const appIcons = [
  ['Collapse view', (
    <svg viewBox="0 0 20 20" className="h-[20px] w-[20px]" fill="none" stroke="#111" strokeWidth="1.800">
      <rect x="1" y="1" width="18" height="18" rx="4" />
      <path d="M10 1V5M10 15V19M1 10H5M15 10H19" stroke="#d6d8df" strokeWidth="3" />
      <path d="M4 4L8 8M4 8H8V4M16 4L12 8M12 4V8H16M4 16L8 12M4 12H8V16M16 16L12 12M16 12H12V16" />
    </svg>
  )],
  ['Download', (
    <svg viewBox="0 0 20 20" className="h-[20px] w-[20px]" fill="none" stroke="#111" strokeWidth="1.600">
      <path d="M8 1H5Q1 1 1 5V15Q1 19 5 19H15Q19 19 19 15V5Q19 1 15 1H12" />
      <path d="M10 4V12" strokeWidth="2.200" /><path d="M6.500 10L10 16L13.500 10Z" fill="#111" stroke="none" />
    </svg>
  )],
  ['Pathway app', (
    <svg viewBox="0 0 20 20" className="h-[20px] w-[20px]" fill="none">
      <circle cx="10" cy="10" r="9" fill="#b9c0c4" stroke="#636f78" strokeWidth="1.500" />
      <path d="M3 6Q8 9 11 4M4 15Q9 12 14 16M12 3L16 7" stroke="#6f8aa5" />
      <path d="M4 14L8 7L9 12M10 14L11 10L13 13L15 9L17 13" stroke="#cf8b79" strokeWidth="1.300" />
    </svg>
  )],
  ['Validate', (
    <svg viewBox="0 0 21 20" className="h-[20px] w-[21px]" fill="none" stroke="#111" strokeWidth="1.600">
      <path d="M14 3H6Q2 3 2 7V9M2 12V14Q2 18 6 18H14Q18 18 18 14V11" /><path d="M7 8L11 13L20 3L11 10Z" fill="#111" />
    </svg>
  )],
  ['Run', (
    <svg viewBox="0 0 18 20" className="h-[20px] w-[18px]" fill="none" stroke="#333" strokeWidth="1.300"><path d="M2 1V19L16.500 10Z" /></svg>
  )],
  ['Add', (
    <svg viewBox="0 0 20 20" className="h-[20px] w-[20px]" fill="none" stroke="#111" strokeWidth="1.700">
      <path d="M7 7V2Q7 1 8 1H12Q13 1 13 2V7H18Q19 7 19 8V12Q19 13 18 13H13V18Q13 19 12 19H8Q7 19 7 18V13H2Q1 13 1 12V8Q1 7 2 7Z" />
    </svg>
  )],
  ['Layout app', (
    <svg viewBox="0 0 20 22" className="h-[22px] w-[20px]" fill="#d6d8df" stroke="#333" strokeWidth="1">
      <path d="M9 11L3 3M9 11L17 3M9 11L2 16M9 11L18 16M9 11L11 20" fill="none" />
      <circle cx="3" cy="3" r="1.500" /><circle cx="17" cy="3" r="2" /><circle cx="2" cy="16" r="1.500" /><circle cx="18" cy="16" r="1.500" /><circle cx="11" cy="20" r="2" />
      <circle cx="9" cy="11" r="2.500" fill="#888" />
    </svg>
  )]
];

const separator = <div className="mr-[2px] ml-[3px] h-full w-px bg-[#c9cbd2]" />;

function Toolbar() {
  return (
    <div className="flex h-[32px] shrink-0 items-center border-b border-[#5f6168] bg-linear-to-b from-[#dcdde3] to-[#d3d5dc]">
      <div className="h-full w-[6px] border-r border-[#c3c5cc] bg-[#eff0f3]" />
      {groups.map((group, i) => (
        <div key={i} className="flex h-full items-center">
          {i > 0 && separator}
          {group.map(([label, icon]) => (
            <button key={label} aria-label={label} className="flex h-[25px] w-[25px] items-center justify-center">{icon}</button>
          ))}
        </div>
      ))}
      <input
        aria-label="Search"
        placeholder="Enter search term..."
        className="mr-[4px] ml-[15px] h-[14px] w-[148px] border border-[#c1c3ca] bg-white px-[2px] text-[7px] text-[#222] placeholder:text-[#333]"
      />
      {appIcons.map(([label, icon]) => (
        <button key={label} aria-label={label} className="flex h-[26px] w-[26px] items-center justify-center">{icon}</button>
      ))}
      <button aria-label="cyFluxViz" className="flex h-[26px] w-[30px] items-center justify-center">
        <svg viewBox="0 0 26 26" className="h-[26px] w-[26px]" fill="none" stroke="#fff" strokeWidth="1.500">
          <circle cx="13" cy="13" r="12.500" fill="#e2312e" stroke="none" />
          <path d="M9 13L11 4M9 13L4 9M9 13L4 18M9 13L12 21M9 13L3 13" />
          <g fill="#fff" stroke="none"><circle cx="9" cy="13" r="3.500" /><circle cx="11" cy="5" r="2" /><circle cx="4" cy="9" r="1.500" /><circle cx="4" cy="18" r="2" /><circle cx="12" cy="21" r="2" /></g>
          <text x="13" y="15" fontSize="4" fill="#fbd" stroke="none" fontFamily="DejaVu Sans, sans-serif">FLUX</text>
        </svg>
      </button>
    </div>
  );
}

const FloatButtons = () => (
  <div className="flex gap-[4px]">
    <button aria-label="Float"><FaRegSquare className="text-[7px] text-[#333]" /></button>
    <button aria-label="Close panel"><FaTimes className="text-[8px] text-black" /></button>
  </div>
);

// ---- Control panel ----
const tree = [
  { name: 'Hepatic_glucose_1', group: true },
  { name: 'Hepatic_glucose_1', n: '4...', e: '7...' },
  { name: 'Main: Hepatic_glucose', n: '8...', e: '1...' },
  { name: 'galactose_30', group: true },
  { name: 'galactose_30', n: '3...', e: '8...' },
  { name: 'Main: galactose_30', n: '6...', e: '1...', selected: true }
];

function ControlPanel() {
  return (
    <aside className="flex w-[130px] shrink-0 flex-col">
      <div className="mr-[3px] flex flex-1 flex-col border border-t-0 border-[#a9abb3]">
        <div className="flex h-[17px] items-center justify-between pr-[5px] pl-[7px]">
          <h2 className="text-[8px]">Control Panel</h2>
          <FloatButtons />
        </div>
        <div role="tablist" className="mt-[2px] flex h-[14px] gap-px px-[5px] text-[8px] leading-[12px]">
          {['Network', 'Style', 'Select'].map((tab, i) => (
            <button
              key={tab} role="tab" aria-selected={i === 0}
              className={`rounded-t-xs border border-[#6f7785] px-[4px] ${i === 0 ? 'bg-linear-to-b from-[#c9d6df] to-[#9fb3c2]' : 'bg-[#e2e3e8]'}`}
            >
              {tab}
            </button>
          ))}
        </div>
        <table className="mt-[4px] mb-auto w-full table-fixed border-collapse text-left text-[7px] leading-[10px]">
          <colgroup><col /><col className="w-[20px]" /><col className="w-[17px]" /></colgroup>
          <thead>
            <tr className="h-[12px] border border-[#b3b5bd] bg-[#e4e5ea] text-[8px]">
              <th className="pl-[3px] font-normal">Network</th>
              <th className="border-l border-[#a9abb3] pl-[2px] font-normal">N...</th>
              <th className="border-l border-[#a9abb3] pl-[2px] font-normal">E...</th>
            </tr>
          </thead>
          <tbody className="bg-white">
            {tree.map((row, i) => (
              <tr key={i} className="h-[10px]">
                <td className={`overflow-hidden p-0 whitespace-nowrap ${row.group ? '' : 'pl-[33px]'} ${row.selected ? 'bg-[#39698a] text-white' : ''}`}>
                  {row.group ? (
                    <span className="flex items-center pl-[2px]">
                      <svg viewBox="0 0 6 5" className="mr-[5px] h-[4px] w-[5px] shrink-0"><path d="M0 0H6L3 5Z" fill="#333" /></svg>
                      <FaSitemap className="mr-[3px] shrink-0 text-[8px] text-[#999]" />
                      {row.name}
                    </span>
                  ) : row.name}
                </td>
                <td className="overflow-hidden p-0 pl-[2px] whitespace-nowrap">{row.n}</td>
                <td className="overflow-hidden p-0 pl-[2px] whitespace-nowrap">{row.e}</td>
              </tr>
            ))}
          </tbody>
        </table>
      </div>
      <div className="mr-[2px] flex h-[8px] items-center justify-center border-b border-[#a9abb3]">
        <div className="h-[2px] w-[12px] border-t border-[#999ba3] bg-[#eceef2]" />
      </div>
      <div className="mr-[2px] h-[164px] shrink-0 bg-white"><Overview /></div>
    </aside>
  );
}

// ---- Results panel ----
function ResultsPanel() {
  const link = 'block w-max text-[#3030b8] underline';
  return (
    <aside className="flex w-[290px] shrink-0 flex-col border-l border-[#a9abb3] pr-px pb-[4px] pl-[5px]">
      <div className="flex h-[17px] items-center justify-between pr-[5px] pl-[7px]">
        <h2 className="text-[8px]">Results Panel</h2>
        <FloatButtons />
      </div>
      <div role="tablist" className="mt-[2px] flex h-[17px] pl-[6px]">
        <button role="tab" aria-selected="true" className="flex w-[54px] items-center rounded-t-xs border border-[#76869a] bg-linear-to-b from-[#cbd7e0] to-[#9db1c1] pl-[4px] text-[8px]">
          cy3sbml
          <svg viewBox="0 0 12 12" className="-ml-[3px] h-[13px] w-[13px] shrink-0">
            <circle cx="6" cy="6" r="6" fill="#111" />
            <path d="M2 4L5 6L4 9M5 6L10 6.500M5 6L6 3" stroke="#ccc" fill="none" />
            <circle cx="2.500" cy="4" r="1.200" fill="#ddd" /><circle cx="4" cy="9" r="1" fill="#ddd" />
          </svg>
        </button>
      </div>
      <article className="mt-[4px] flex-1 border border-[#a9abb3] bg-white px-[4px] pt-[7px] text-[7px] leading-[9px] text-[#333]">
        <h3 className="text-[9px] leading-[12px] font-bold text-[#222]"><span className="font-normal text-[#666]">Species</span> : c__acptgal (Acceptor-galactose)</h3>
        <div className="mt-[6px]">
          <p><b className="text-[#111]">simple chemical</b> <b className="text-[#187818]">SBO:0000247</b></p>
          <p>Simple, non-repetitive chemical entity.</p>
          <a className={link} href="#main">http://www.ebi.ac.uk/sbo/main</a>
          <a className={link} href="#lookup">http://www.ebi.ac.uk/ontology-lookup</a>
          <a className={link} href="#sbo">http://purl.bioontology.org/ontology/SBO</a>
        </div>
        <hr className="mb-[3px] border-[#888]" />
        <p><b className="text-[#111]">compartment</b>: c</p>
        <p><b className="text-[#111]">value</b>: 0.0 [mol*m^(-3)]</p>
        <p className="flex h-[11px] items-center gap-[3px]">
          <span><b className="text-[#111]">constant</b>:</span>
          <svg viewBox="0 0 10 10" className="h-[9px] w-[9px]" fill="none" stroke="#c02a35"><circle cx="5" cy="5" r="4.400" /><path d="M3 3L7 7M7 3L3 7" /></svg>
        </p>
        <p className="flex h-[11px] items-center gap-[3px]">
          <span><b className="text-[#111]">boundaryCondition</b>:</span>
          <svg viewBox="0 0 10 10" className="h-[9px] w-[9px]" fill="none" stroke="#2f8a45"><circle cx="5" cy="5" r="4.400" /><path d="M2 5H8M5 2V8" /></svg>
        </p>
        <hr className="mt-px mb-[12px] border-[#888]" />
        <p><b className="text-[#111]">BIOLOGICAL_QUALIFIER : BQB_IS</b></p>
        <p><span className="text-[#cc3a3a]">SBO:0000247</span> (biomodels.sbo)</p>
        <hr className="mt-px border-[#888]" />
      </article>
    </aside>
  );
}

// ---- Table panel ----
const columns = [
  ['shared name', 'w-[92px]', 'Acceptor-galactose'],
  ['id', 'w-[47px]', 'c__acptgal'],
  ['sbml-type', 'w-[78px]', 'species'],
  ['sbo', 'w-[55px]', 'SBO:0000...'],
  ['metaId', 'w-[68px]', 'meta_542963...'],
  ['biomodels.sbo', 'w-[97px]', 'SBO:0000247'],
  ['bto', 'w-[54px]', ''],
  ['go', 'w-[51px]', ''],
  ['fma', 'w-[55px]', ''],
  ['label', 'w-[59px]', 'Acceptor-g...'],
  ['units', 'w-[60px]', 'mole'],
  ['derivedUnits', 'w-[89px]', 'mol*m^(-3)'],
  ['constant', 'w-[76px]', 'checkbox'],
  ['spatialDimensions', 'w-[112px]', ''],
  ['value', 'w-[62px]', '0.0'],
  ['', 'w-[11px]', '']
];

const tableTools = [
  ['Options', <FaCog className="text-[10px] text-black" />],
  ['Columns', (
    <svg viewBox="0 0 14 12" className="h-[12px] w-[14px]" fill="none" stroke="#222"><path d="M.5 .5H13.500V11.500H.5ZM7 1V11" /><path d="M0 1H14" strokeWidth="2" /></svg>
  )],
  ['Select all', <span className="flex text-[8px] text-black"><FaCheckSquare /><FaCheckSquare /></span>],
  ['Select none', <span className="flex gap-px text-[7px] text-[#666]"><FaRegSquare /><FaRegSquare /></span>],
  ['Add column', <FaPlus className="text-[12px] text-black" />],
  ['Delete column', <FaRegTrashAlt className="text-[12px] text-[#222]" />],
  ['Delete table', (
    <svg viewBox="0 0 13 7" className="h-[7px] w-[13px]" fill="none" stroke="#999ba1"><path d="M.5 1H8V5.500H.5ZM1 3H8" /><circle cx="10" cy="3.500" r="2.200" strokeWidth="1.500" /></svg>
  )],
  ['Function builder', <i className="font-['Liberation_Serif',serif] text-[12px] text-[#94969c]">f(x)</i>]
];

function TablePanel() {
  return (
    <section className="flex h-[176px] shrink-0 flex-col">
      <div className="flex h-[19px] items-center justify-between pr-[6px] pl-[8px]">
        <h2 className="text-[8px]">Table Panel</h2>
        <FloatButtons />
      </div>
      <div className="-ml-px flex h-[17px]">
        {tableTools.map(([label, icon]) => (
          <button key={label} aria-label={label} className="flex w-[24px] shrink-0 items-center justify-center">{icon}</button>
        ))}
      </div>
      <div className="mt-[5px] ml-px flex flex-1 flex-col overflow-hidden border border-[#8f9199] pt-px">
        <table className="w-full table-fixed border-collapse text-left">
          <thead>
            <tr className="h-[15px] border-t border-[#a9abb3] bg-linear-to-b from-[#dcdde3] to-[#cfd1d8] text-[8px] leading-[10px]">
              {columns.map(([name, width]) => (
                <th key={name} className={`${width} border-r border-[#a1a3ab] p-0 font-normal`}>
                  <span className="flex items-center">
                    <FaSitemap className="ml-[2px] shrink-0 text-[7px] text-[#8c8e95]" />
                    <span className="flex-1 pr-[4px] text-center">{name}</span>
                  </span>
                </th>
              ))}
            </tr>
          </thead>
          <tbody>
            <tr className="h-[10px] bg-white text-[7px] leading-[10px]">
              {columns.map(([name, , value]) => (
                <td key={name} className={`overflow-hidden p-0 px-[5px] whitespace-nowrap ${name === 'value' ? 'text-right' : ''}`}>
                  {value === 'checkbox' ? (
                    <input type="checkbox" aria-label="constant" className="mx-auto block h-[6px] w-[6px] appearance-none border border-[#444]" />
                  ) : value}
                </td>
              ))}
            </tr>
          </tbody>
        </table>
        <div className="mt-auto flex h-[10px] items-center bg-linear-to-b from-[#a9abb3] to-[#d9dbe1]">
          <button aria-label="Scroll left" className="flex h-full w-[10px] items-center justify-center bg-[#dfe1e6]">
            <svg viewBox="0 0 4 4" className="h-[4px] w-[4px]"><path d="M4 0V4L0 2Z" fill="#222" /></svg>
          </button>
          <div className="h-full w-[34%] rounded-b-full border border-[#53748c] bg-linear-to-b from-[#dbe9f1] via-[#a3c2d4] to-[#d3e6f0]" />
          <button aria-label="Scroll right" className="ml-auto flex h-full w-[11px] items-center justify-center bg-[#dfe1e6]">
            <svg viewBox="0 0 4 4" className="h-[4px] w-[4px]"><path d="M0 0V4L4 2Z" fill="#222" /></svg>
          </button>
        </div>
      </div>
      <div role="tablist" className="mt-px flex h-[17px] gap-px border-t-2 border-[#8a9aa8] bg-linear-to-b from-[#c9d4de] to-[#d6d8df] to-40% pb-px pl-[6px] text-[8px] leading-[12px]">
        {['Node Table', 'Edge Table', 'Network Table'].map((tab, i) => (
          <button
            key={tab} role="tab" aria-selected={i === 0}
            className={`rounded-b-xs border border-[#5d6672] px-[4px] ${i === 0 ? 'bg-linear-to-b from-[#9fb3c2] to-[#c6d3dd]' : 'bg-[#e2e3e8]'}`}
          >
            {tab}
          </button>
        ))}
      </div>
    </section>
  );
}

const menus = ['File', 'Edit', 'View', 'Select', 'Layout', 'Apps', 'Tools', 'Help'];

export default function App() {
  return (
    <div className="min-h-screen bg-black px-10">
      <div className="flex min-h-screen flex-col bg-[#d6d8df] font-['DejaVu_Sans',sans-serif] text-[#2d2e33]">
        <header className="flex h-[17px] shrink-0 items-center gap-[3px] bg-linear-to-b from-[#4b4a46] to-[#393835] pl-[7px]">
          <button aria-label="Close" className="flex h-[10px] w-[10px] items-center justify-center rounded-full bg-[#e3582c] text-[6px] text-[#4a1c0d]"><FaTimes /></button>
          <button aria-label="Minimize" className="flex h-[9px] w-[9px] items-center justify-center rounded-full bg-[#777670]"><span className="h-px w-[5px] bg-[#333]" /></button>
          <button aria-label="Maximize" className="flex h-[9px] w-[9px] items-center justify-center rounded-full bg-[#777670]"><span className="h-[4px] w-[5px] border border-[#333]" /></button>
          <h1 className="ml-[4px] font-['Open_Sans',sans-serif] text-[9px] font-bold text-[#e4e1d8]">Session: /home/mkoenig/Desktop/test/glucose.cys</h1>
        </header>
        <nav className="flex h-[14px] shrink-0 items-center gap-[7px] border-b border-[#b9bbc3] bg-linear-to-b from-white to-[#dcdde3] pl-[6px] text-[7px]">
          {menus.map((menu) => <button key={menu}>{menu}</button>)}
        </nav>
        <Toolbar />
        <main className="flex flex-1">
          <ControlPanel />
          <div className="flex min-w-0 flex-1 flex-col">
            <div className="flex flex-1">
              <div className="grid min-h-[464px] flex-1 grid-cols-2 grid-rows-2 gap-px bg-[#60626b] pr-[2px] pb-[3px] pl-px">
                <NetworkWindow id="hm" title="Main: Hepatic_glucose_1" data={hepaticMain} />
                <NetworkWindow id="gm" title="Main: galactose_30" data={galactoseMain} active />
                <NetworkWindow id="gv" title="galactose_30" data={galactoseView} />
                <NetworkWindow id="hv" title="Hepatic_glucose_1" data={hepaticView} />
              </div>
              <ResultsPanel />
            </div>
            <TablePanel />
          </div>
        </main>
        <footer className="flex h-[17px] shrink-0 items-center justify-between border-t border-[#a9abb3] pr-[6px] pl-[3px]">
          <button aria-label="Task history" className="flex h-[15px] w-[30px] items-center justify-center border border-[#b3b5bd] bg-[#eceef2] text-[9px] text-[#222]"><FaListUl /></button>
          <button className="flex h-[14px] items-center gap-[4px] rounded-xs border border-[#9fa1a9] bg-linear-to-b from-white to-[#d9dbe1] px-[6px] text-[7px]">
            <span className="h-[8px] w-[8px] rounded-full bg-[#128a43]" />
            Memory
          </button>
        </footer>
      </div>
    </div>
  );
}
